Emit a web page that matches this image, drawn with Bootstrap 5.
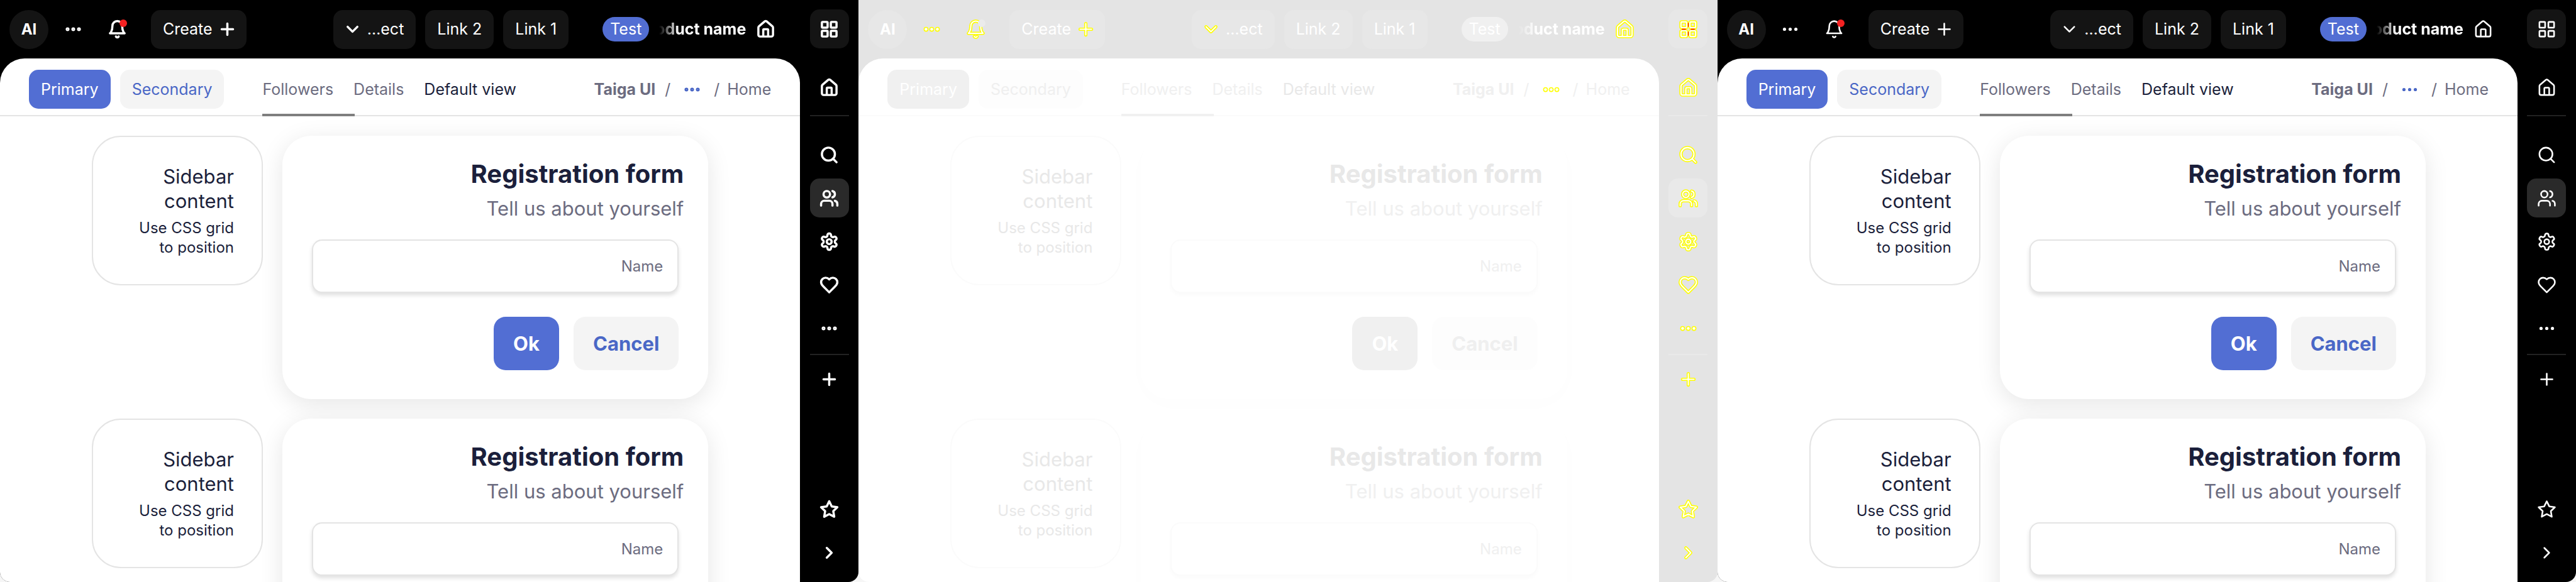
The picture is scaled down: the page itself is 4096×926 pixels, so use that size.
<!DOCTYPE html>
<html lang="en">
<head>
<meta charset="utf-8">
<meta name="viewport" content="width=device-width, initial-scale=1">
<title>Layout preview</title>
<link rel="stylesheet" href="https://cdn.jsdelivr.net/npm/bootstrap@5.3.0/dist/css/bootstrap.min.css">
<style>
body{font-family:Inter,"Open Sans",sans-serif;font-size:25px;line-height:31px;background:#f6f6f6}
.pane{
  --bar:#000;--chip:#141414;--chip-on:#2a2a2a;--rail-line:#222;--rule:#e4e4e4;
  --blue:#526ed3;--soft:#f4f4f4;--soft-text:#4a67c6;--ink:#1b1f3b;--muted:#6c6c80;
  --mark:#7f7f7f;--dot:#f52222;--icon:#fff;--icon-soft:#4a67c6;--stroke:2.7;--halo:none;
  --cast:rgba(0,0,0,.1);--cast-input:rgba(0,0,0,.12);
  flex:1 1 0;min-width:0;background:var(--bar);color:#fff;border-radius:0 0 16px 16px;overflow:hidden}
.pane.thin{--stroke:2}
.pane.delta{
  --bar:#e4e4e4;--chip:#e7e7e7;--chip-on:#e9e9e9;--rail-line:#e9e9e9;--rule:#fbfbfb;
  --blue:#f0f0f0;--soft:#fdfdfd;--soft-text:#efefef;--ink:#e8e8e8;--muted:#f0f0f0;
  --mark:#f1f1f1;--dot:#ebebeb;--icon-soft:#fff;--stroke:1.6;--halo:#ff0;
  --cast:rgba(0,0,0,.012);--cast-input:rgba(0,0,0,.02)}
.pane svg{width:31px;height:31px;flex:none;display:block;fill:none;stroke-linecap:round;stroke-linejoin:round;overflow:visible}
.pane .halo{stroke:var(--halo);stroke-width:4}
.pane .line{stroke:var(--icon);stroke-width:var(--stroke)}
.pane .cross{stroke:#f00;stroke-width:1;stroke-linecap:butt}
.pane a{text-decoration:none;color:inherit}
.topbar{height:93px;padding:0 39px 0 15px}
.chip{display:flex;align-items:center;justify-content:center;height:62px;border:0;border-radius:15px;background:var(--chip);color:#fff;font-size:25px;line-height:31px;white-space:nowrap;padding:0 19px;gap:8px}
.chip.icon-end{padding-right:15px}
.chip.icon-start{padding-left:15px}
.square{width:62px;height:62px;padding:0;flex:none;background:transparent}
.square.filled{background:var(--chip)}
.square.on{background:var(--chip-on)}
.avatar{border-radius:50%;background:var(--chip);font-size:24px;font-weight:700}
.alert-dot{position:absolute;left:35px;top:15px;width:12px;height:12px;border-radius:50%;background:var(--dot)}
.tag-pill{background:var(--blue);border-radius:20px;height:39px;line-height:39px;padding:0 12px}
.product{width:138px;overflow:hidden;justify-content:flex-end;white-space:nowrap;font-weight:700;
  -webkit-mask-image:linear-gradient(90deg,transparent,#000 31px);mask-image:linear-gradient(90deg,transparent,#000 31px)}
.sheet{background:#fff;color:var(--ink);border-radius:39px 39px 0 0}
.subbar{height:92px;padding:8px 46px 0;border-bottom:2px solid var(--rule)}
.act{background:var(--soft);color:var(--soft-text)}
.act.main{background:var(--blue);color:#fff}
.tabs{margin-left:61px;gap:32px;color:var(--muted)}
.tabs a{line-height:82px;white-space:nowrap}
.tabs .current{position:relative}
.tabs .current::after{content:"";position:absolute;left:0;bottom:-2px;width:147px;height:4px;background:var(--mark)}
.crumbs{color:var(--muted)}
.crumbs svg{margin:0 19px}
.crumbs .line{stroke:var(--icon-soft)}
.entries{padding:31px 146px;gap:31px}
.side{width:272px;flex:none;border:2px solid var(--rule);border-radius:46px;padding:43px 44px;text-align:right}
.side p{font-size:31px;line-height:39px;margin:0 0 8px}
.side div{font-size:24px}
.panel-form{flex:1;border-radius:46px;padding:38px 39px 46px;background:#fff;box-shadow:0 8px 38px var(--cast)}
.panel-form h2{font-size:40px;line-height:46px;font-weight:700;text-align:right;margin:0 0 12px}
.panel-form p{font-size:31px;line-height:40px;color:var(--muted);text-align:right;margin:0 0 29px}
.panel-form form{padding:0 8px}
.panel-form input{height:85px;border:2px solid var(--rule);border-radius:16px;padding:0 23px;text-align:right;font-size:24px;color:var(--ink);box-shadow:0 4px 6px var(--cast-input);margin-bottom:38px}
.panel-form input::placeholder{color:var(--muted);opacity:1}
.big{height:85px;border-radius:19px;padding:0 31px;font-size:31px;font-weight:700;border:0}
.rail{width:93px;flex:none;padding:15px 0 16px;gap:7px}
.rail hr{width:62px;margin:0;border:0;height:2px;background:var(--rail-line);opacity:1}
</style>
</head>
<body>
<svg width="0" height="0" class="position-absolute" aria-hidden="true">
  <symbol id="i-dots" viewBox="0 0 24 24"><circle cx="5" cy="12" r="1"/><circle cx="12" cy="12" r="1"/><circle cx="19" cy="12" r="1"/></symbol>
  <symbol id="i-bell" viewBox="0 0 24 24"><path d="M6 8a6 6 0 0 1 12 0c0 7 3 9 3 9H3s3-2 3-9M10.3 21a1.94 1.94 0 0 0 3.4 0"/></symbol>
  <symbol id="i-plus" viewBox="0 0 24 24"><path d="M5 12h14M12 5v14"/></symbol>
  <symbol id="i-down" viewBox="0 0 24 24"><path d="m6 9 6 6 6-6"/></symbol>
  <symbol id="i-right" viewBox="0 0 24 24"><path d="m9 18 6-6-6-6"/></symbol>
  <symbol id="i-home" viewBox="0 0 24 24"><path d="M15 21v-8a1 1 0 0 0-1-1h-4a1 1 0 0 0-1 1v8M3 10a2 2 0 0 1 .709-1.528l7-5.999a2 2 0 0 1 2.582 0l7 5.999A2 2 0 0 1 21 10v9a2 2 0 0 1-2 2H5a2 2 0 0 1-2-2z"/></symbol>
  <symbol id="i-grid" viewBox="0 0 24 24"><rect x="3" y="3" width="7" height="7" rx="1"/><rect x="14" y="3" width="7" height="7" rx="1"/><rect x="14" y="14" width="7" height="7" rx="1"/><rect x="3" y="14" width="7" height="7" rx="1"/></symbol>
  <symbol id="i-search" viewBox="0 0 24 24"><circle cx="11" cy="11" r="8"/><path d="m21 21-4.3-4.3"/></symbol>
  <symbol id="i-users" viewBox="0 0 24 24"><path d="M16 21v-2a4 4 0 0 0-4-4H6a4 4 0 0 0-4 4v2M22 21v-2a4 4 0 0 0-3-3.87M16 3.13a4 4 0 0 1 0 7.75"/><circle cx="9" cy="7" r="4"/></symbol>
  <symbol id="i-gear" viewBox="0 0 24 24"><path d="M12.22 2h-.44a2 2 0 0 0-2 2v.18a2 2 0 0 1-1 1.73l-.43.25a2 2 0 0 1-2 0l-.15-.08a2 2 0 0 0-2.73.73l-.22.38a2 2 0 0 0 .73 2.73l.15.1a2 2 0 0 1 1 1.72v.51a2 2 0 0 1-1 1.74l-.15.09a2 2 0 0 0-.73 2.73l.22.38a2 2 0 0 0 2.73.73l.15-.08a2 2 0 0 1 2 0l.43.25a2 2 0 0 1 1 1.73V20a2 2 0 0 0 2 2h.44a2 2 0 0 0 2-2v-.18a2 2 0 0 1 1-1.73l.43-.25a2 2 0 0 1 2 0l.15.08a2 2 0 0 0 2.73-.73l.22-.39a2 2 0 0 0-.73-2.73l-.15-.08a2 2 0 0 1-1-1.74v-.5a2 2 0 0 1 1-1.74l.15-.09a2 2 0 0 0 .73-2.73l-.22-.38a2 2 0 0 0-2.73-.73l-.15.08a2 2 0 0 1-2 0l-.43-.25a2 2 0 0 1-1-1.73V4a2 2 0 0 0-2-2z"/><circle cx="12" cy="12" r="3"/></symbol>
  <symbol id="i-heart" viewBox="0 0 24 24"><path d="M19 14c1.49-1.46 3-3.21 3-5.5A5.5 5.5 0 0 0 16.5 3c-1.76 0-3 .5-4.5 2-1.5-1.5-2.74-2-4.5-2A5.5 5.5 0 0 0 2 8.5c0 2.3 1.5 4.05 3 5.5l7 7z"/></symbol>
  <symbol id="i-star" viewBox="0 0 24 24"><path d="m12 2 3.09 6.26L22 9.27l-5 4.87 1.18 6.88L12 17.77l-6.18 3.25L7 14.14 2 9.27l6.91-1.01z"/></symbol>
</svg>

<main class="d-flex vh-100 overflow-hidden" id="panes"></main>

<script src="https://cdn.jsdelivr.net/npm/bootstrap@5.3.0/dist/js/bootstrap.bundle.min.js"></script>
<script>
const icon = (name, extra = '') =>
  `<svg viewBox="0 0 24 24" aria-hidden="true"><use class="halo" href="#i-${name}"/><use class="line" href="#i-${name}"/>${extra}</svg>`;
const square = (name, label, cls = '', extra = '') =>
  `<button type="button" class="chip square ${cls}" aria-label="${label}">${icon(name, extra)}</button>`;

const entry = id => `
  <section class="d-flex align-items-start entry" style="gap:31px">
    <aside class="side"><p>Sidebar<br>content</p><div>Use CSS grid<br>to position</div></aside>
    <div class="panel-form">
      <h2>Registration form</h2>
      <p>Tell us about yourself</p>
      <form>
        <input type="text" class="d-block w-100 bg-white" id="${id}" placeholder="Name" aria-label="Name">
        <div class="d-flex justify-content-end" style="gap:23px">
          <button type="button" class="act main big">Ok</button>
          <button type="button" class="act big">Cancel</button>
        </div>
      </form>
    </div>
  </section>`;

const pane = (kind, n) => `
<div class="pane ${kind} d-flex">
  <div class="d-flex flex-column flex-grow-1 overflow-hidden">
    <header class="topbar d-flex align-items-center flex-shrink-0">
      <div class="d-flex align-items-center" style="gap:8px">
        <button type="button" class="chip square avatar">AI</button>
        ${square('dots', 'More')}
        <div class="position-relative">${square('bell', 'Notifications')}<span class="alert-dot"></span></div>
        <button type="button" class="chip icon-end" style="margin-left:15px">Create ${icon('plus')}</button>
      </div>
      <nav class="d-flex ms-auto" style="gap:15px">
        <button type="button" class="chip icon-start">${icon('down')} …ect</button>
        <a href="#" class="chip">Link 2</a>
        <a href="#" class="chip">Link 1</a>
      </nav>
      <div class="d-flex align-items-center" style="margin-left:54px;gap:16px">
        <span class="tag-pill">Test</span>
        <span class="product d-flex">Product name</span>
        ${icon('home')}
      </div>
    </header>
    <div class="sheet flex-grow-1 overflow-hidden">
      <div class="subbar d-flex align-items-center">
        <div class="d-flex" style="gap:15px">
          <button type="button" class="chip act main">Primary</button>
          <button type="button" class="chip act">Secondary</button>
        </div>
        <nav class="tabs d-flex">
          <a href="#" class="current">Followers</a>
          <a href="#">Details</a>
          <a href="#" style="color:var(--ink)">Default view</a>
        </nav>
        <nav class="crumbs d-flex align-items-center ms-auto" aria-label="Breadcrumb">
          <a href="#" class="fw-bold">Taiga UI</a><span style="margin-left:15px">/</span>
          ${icon('dots')}
          <span style="margin-right:12px">/</span><a href="#">Home</a>
        </nav>
      </div>
      <div class="entries d-flex flex-column">${entry('name-' + n + 'a')}${entry('name-' + n + 'b')}</div>
    </div>
  </div>
  <nav class="rail d-flex flex-column align-items-center">
    ${square('grid', 'Apps', 'filled', kind === 'delta' ? '<path class="cross" d="M12 4v5M12 15v5M4 12h5M15 12h5"/>' : '')}
    <div style="margin-top:24px">${square('home', 'Home')}</div>
    <hr style="margin-bottom:23px;margin-top:6px">
    ${square('search', 'Search')}
    ${square('users', 'Users', 'on')}
    ${square('gear', 'Settings')}
    ${square('heart', 'Favourites')}
    ${square('dots', 'More')}
    <hr style="margin-top:3px">
    ${square('plus', 'Add')}
    <div class="mt-auto">${square('star', 'Starred')}</div>
    ${square('right', 'Expand')}
  </nav>
</div>`;

document.getElementById('panes').innerHTML = ['bold', 'delta', 'thin'].map(pane).join('');
</script>
</body>
</html>
